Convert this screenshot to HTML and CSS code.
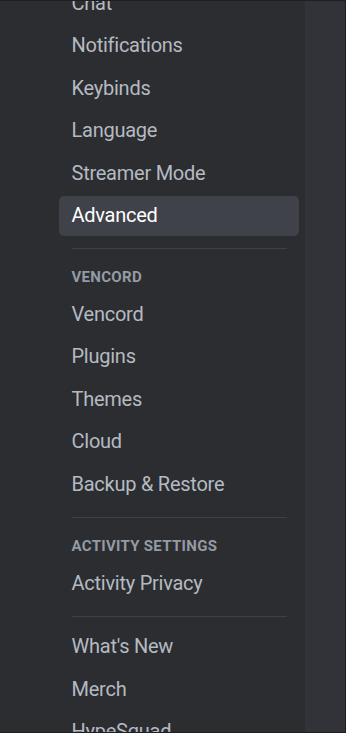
FILE: index.html
```html
<!DOCTYPE html>
<html lang="en">
<head>
<meta charset="utf-8">
<title>Settings</title>
<link rel="stylesheet" href="styles.css">
</head>
<body>
<div class="window">
  <aside class="sidebar">
    <nav class="side-nav">
      <div class="item">Chat</div>
      <div class="item">Notifications</div>
      <div class="item">Keybinds</div>
      <div class="item">Language</div>
      <div class="item">Streamer Mode</div>
      <div class="item active">Advanced</div>
      <div class="divider"></div>
      <div class="header">Vencord</div>
      <div class="item">Vencord</div>
      <div class="item">Plugins</div>
      <div class="item">Themes</div>
      <div class="item">Cloud</div>
      <div class="item">Backup &amp; Restore</div>
      <div class="divider"></div>
      <div class="header">Activity Settings</div>
      <div class="item">Activity Privacy</div>
      <div class="divider"></div>
      <div class="item">What's New</div>
      <div class="item">Merch</div>
      <div class="item">HypeSquad</div>
    </nav>
  </aside>
  <main class="content"></main>
</div>
</body>
</html>
```
FILE: styles.css
```css
html, body {
  margin: 0;
  padding: 0;
  height: 100%;
  background: #313338;
  overflow: hidden;
}

.window {
  display: flex;
  height: 733px;
  box-sizing: border-box;
  border-top: 1px solid #1e1f22;
  border-right: 1px solid #1e1f22;
  border-bottom: 1px solid #1e1f22;
  font-family: Roboto, "Noto Sans", sans-serif;
}

.sidebar {
  width: 305px;
  flex: none;
  background: #2b2d31;
  overflow: hidden;
}

.content {
  flex: 1;
  background: #313338;
}

.side-nav {
  width: 240px;
  margin: -18px 0 0 59px;
  display: flex;
  flex-direction: column;
}

.item {
  height: 40px;
  box-sizing: border-box;
  padding: 7.5px 12.5px;
  margin-bottom: 2.5px;
  border-radius: 5px;
  font-size: 20px;
  line-height: 25px;
  letter-spacing: -0.25px;
  color: #b5bac1;
  white-space: nowrap;
}

.item.active {
  background: #404249;
  color: #ffffff;
}

.divider {
  height: 1.25px;
  margin: 10px 12.5px;
  background: #3f4147;
}

.header {
  height: 35px;
  box-sizing: border-box;
  padding: 7.5px 12.5px;
  font-size: 15px;
  line-height: 20px;
  font-weight: 700;
  text-transform: uppercase;
  letter-spacing: 0.02em;
  color: #949ba4;
}
```
